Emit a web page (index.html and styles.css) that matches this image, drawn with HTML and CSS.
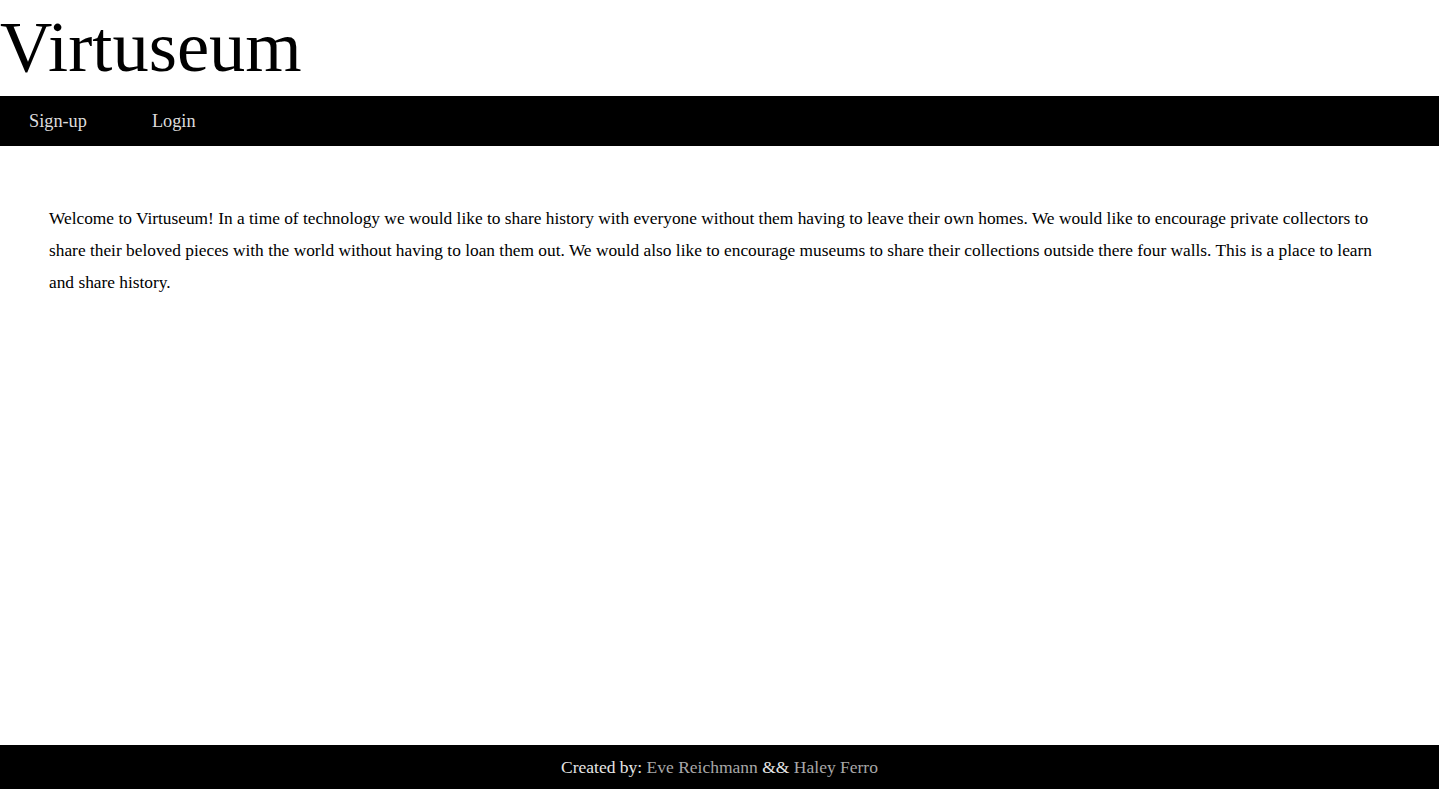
FILE: index.html
```html
<!DOCTYPE html>
<html>
<head>
<meta charset="utf-8">
<title>Virtuseum</title>
<link rel="stylesheet" href="styles.css">
</head>
<body>
<div class="page">
  <header class="masthead">
    <h1 class="title">Virtuseum</h1>
  </header>
  <nav class="nav">
    <a class="nav-link" href="#">Sign-up</a>
    <a class="nav-link" href="#">Login</a>
  </nav>
  <main class="content">
    <p class="intro">Welcome to Virtuseum! In a time of technology we would like to share history with everyone without them having to leave their own homes. We would like to encourage private collectors to share their beloved pieces with the world without having to loan them out. We would also like to encourage museums to share their collections outside there four walls. This is a place to learn and share history.</p>
  </main>
  <footer class="footer">
    <span class="credit">Created by: <span class="name">Eve Reichmann</span> &amp;&amp; <span class="name">Haley Ferro</span></span>
  </footer>
</div>
</body>
</html>
```
FILE: styles.css
```css
html, body {
  margin: 0;
  padding: 0;
  height: 100%;
}
body {
  font-family: "Liberation Serif", serif;
  background: #fff;
  color: #000;
}
.page {
  min-height: 100%;
  display: flex;
  flex-direction: column;
}
.masthead {
  height: 96px;
  display: flex;
  align-items: flex-start;
}
.title {
  margin: 0;
  font-weight: normal;
  font-size: 72.5px;
  line-height: 1;
  padding-top: 11px;
}
.nav {
  background: #000;
  height: 50px;
  display: flex;
  align-items: center;
  padding-left: 29px;
  gap: 65px;
}
.nav-link {
  color: #ddd;
  text-decoration: none;
  font-size: 18.3px;
}
.content {
  flex: 1;
  padding: 57px 49px 0 49px;
}
.intro {
  margin: 0;
  font-size: 17.35px;
  line-height: 32px;
}
.footer {
  background: #000;
  height: 44px;
  display: flex;
  align-items: center;
  justify-content: center;
}
.credit {
  color: #e6e6e6;
  font-size: 17.5px;
}
.name {
  color: #a8a8a8;
}
```
